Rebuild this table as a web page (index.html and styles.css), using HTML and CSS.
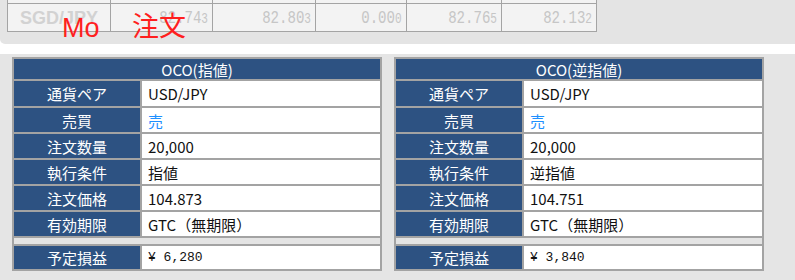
FILE: index.html
```html
<!DOCTYPE html>
<html lang="ja">
<head>
<meta charset="utf-8">
<link rel="stylesheet" href="styles.css">
</head>
<body>
<div class="rates-panel">
  <div class="rates">
    <div class="rc"></div><div class="rc"></div><div class="rc"></div><div class="rc"></div><div class="rc"></div><div class="rc"></div>
    <div class="rc pair">SGD/JPY</div>
    <div class="rc num"><span class="n">82.74<small>3</small></span></div>
    <div class="rc num"><span class="n">82.80<small>3</small></span></div>
    <div class="rc num"><span class="n">0.00<small>0</small></span></div>
    <div class="rc num"><span class="n">82.76<small>5</small></span></div>
    <div class="rc num"><span class="n">82.13<small>2</small></span></div>
  </div>
  <span class="stamp stamp-mo">Mo</span>
  <span class="stamp stamp-order">注文</span>
</div>
<div class="orders">
  <div class="order">
    <div class="head">OCO(指値)</div>
    <div class="lbl">通貨ペア</div><div class="val">USD/JPY</div>
    <div class="lbl">売買</div><div class="val sell">売</div>
    <div class="lbl">注文数量</div><div class="val">20,000</div>
    <div class="lbl">執行条件</div><div class="val">指値</div>
    <div class="lbl">注文価格</div><div class="val">104.873</div>
    <div class="lbl">有効期限</div><div class="val">GTC（無期限）</div>
    <div class="spacer"></div>
    <div class="lbl last">予定損益</div><div class="val mono last">¥ 6,280</div>
  </div>
  <div class="order">
    <div class="head">OCO(逆指値)</div>
    <div class="lbl">通貨ペア</div><div class="val">USD/JPY</div>
    <div class="lbl">売買</div><div class="val sell">売</div>
    <div class="lbl">注文数量</div><div class="val">20,000</div>
    <div class="lbl">執行条件</div><div class="val">逆指値</div>
    <div class="lbl">注文価格</div><div class="val">104.751</div>
    <div class="lbl">有効期限</div><div class="val">GTC（無期限）</div>
    <div class="spacer"></div>
    <div class="lbl last">予定損益</div><div class="val mono last">¥ 3,840</div>
  </div>
</div>
</body>
</html>
```

FILE: styles.css
```css
html, body {
  margin: 0;
  padding: 0;
  background: #ffffff;
  font-family: "Noto Sans CJK JP", "Noto Sans", sans-serif;
}

.rates-panel {
  position: relative;
  height: 44px;
  background: #e4e4e4;
  border-bottom-left-radius: 5px;
  padding-left: 7px;
  margin-bottom: 10px;
  overflow: hidden;
}

.rates {
  display: grid;
  grid-template-columns: 102px 101px 102px 90px 94px 94px;
  grid-template-rows: 3px 27px;
  gap: 1px;
  padding: 0 1px 1px 1px;
  background: #a4a4a4;
  width: max-content;
}

.rc {
  background: #f3f3f3;
}

.pair {
  font-family: "Liberation Sans", Arial, sans-serif;
  font-weight: bold;
  font-size: 18px;
  color: #d2d2d2;
  display: flex;
  align-items: center;
  justify-content: center;
  padding-top: 1px;
}

.num {
  display: flex;
  align-items: center;
  justify-content: flex-end;
  padding-right: 4px;
}

.n {
  display: inline-block;
  font-family: "Liberation Mono", monospace;
  font-size: 19px;
  color: #c6c6c6;
  transform: scaleX(0.74);
  transform-origin: right center;
}

.n small {
  font-size: 15px;
}

.stamp {
  position: absolute;
  color: #ff1f1f;
  font-size: 27px;
  line-height: 27px;
}

.stamp-mo {
  left: 62px;
  top: 15px;
  font-family: "Liberation Sans", Arial, sans-serif;
}

.stamp-order {
  left: 132px;
  top: 11px;
  font-family: "Noto Sans CJK JP", sans-serif;
}

.orders {
  background: #e5e5e5;
  height: 226px;
  padding: 3px 0 0 12px;
  display: flex;
  gap: 12px;
  align-items: flex-start;
}

.order {
  display: grid;
  grid-template-columns: 126px 238px;
  grid-template-rows: 20px 25px 24px 24px 24px 24px 24px 6px 23px;
  gap: 2px;
  padding: 2px;
  background: #a3a3a3;
}

.head {
  grid-column: 1 / 3;
  background: #2d5282;
  color: #ffffff;
  font-size: 15px;
  display: flex;
  align-items: center;
  justify-content: center;
}

.lbl {
  background: #2d5282;
  color: #ffffff;
  font-size: 15px;
  display: flex;
  align-items: center;
  justify-content: center;
}

.val {
  background: #ffffff;
  color: #111111;
  font-size: 15px;
  display: flex;
  align-items: center;
  padding-left: 6px;
}

.sell {
  color: #1e90ff;
}

.mono {
  font-family: "Liberation Mono", monospace;
  font-size: 13px;
}

.spacer {
  grid-column: 1 / 3;
  background: #e4e4e4;
}
```
